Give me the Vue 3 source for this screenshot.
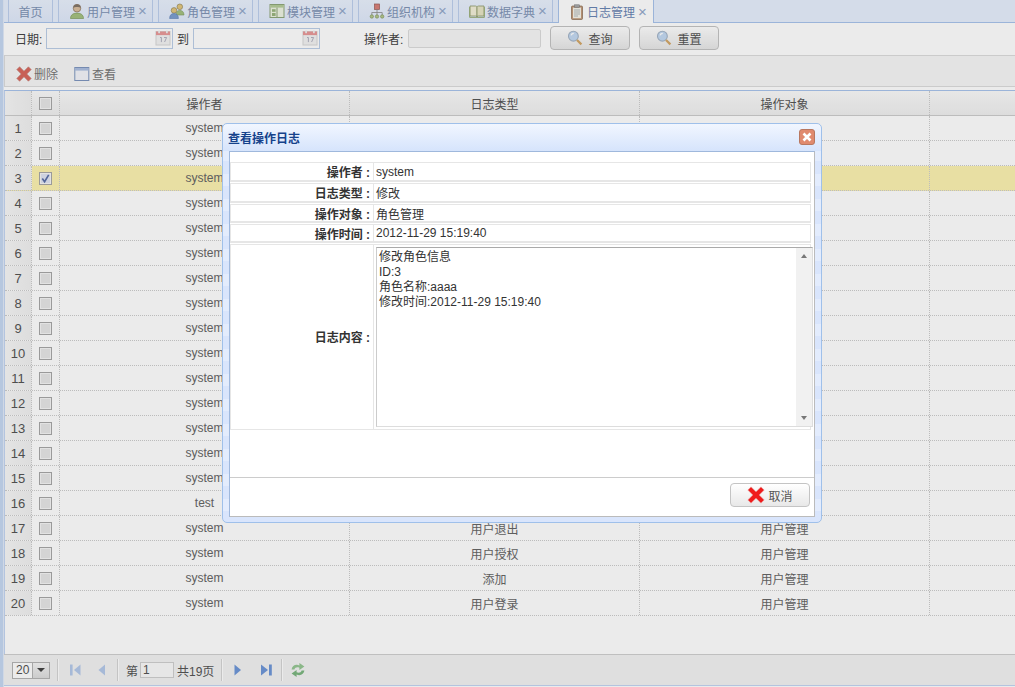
<template>
  <div class="page">
    <div class="tabs">
      <div v-for="tab in tabs" :key="tab.title" :class="['tab', { active: tab.active, plain: !tab.icon }]">
        <svg v-if="tab.icon" class="tab-icon" viewBox="0 0 16 16" v-html="icons[tab.icon]"></svg>
        <span>{{ tab.title }}</span>
        <span v-if="tab.icon" class="tab-close">×</span>
      </div>
    </div>

    <div class="search">
      <label class="date-label">日期:</label>
      <div class="date-box"><svg class="cal" viewBox="0 0 16 16" v-html="icons.calendar"></svg></div>
      <label class="to-label">到</label>
      <div class="date-box"><svg class="cal" viewBox="0 0 16 16" v-html="icons.calendar"></svg></div>
      <label class="user-label">操作者:</label>
      <div class="user-box"></div>
      <button class="btn search-btn"><svg viewBox="0 0 16 16" v-html="icons.search"></svg>查询</button>
      <button class="btn reset-btn"><svg viewBox="0 0 16 16" v-html="icons.search"></svg>重置</button>
    </div>

    <div class="actions">
      <span class="action"><svg viewBox="0 0 16 16" v-html="icons.cross"></svg>删除</span>
      <span class="action view"><svg viewBox="0 0 16 16" v-html="icons.window"></svg>查看</span>
    </div>

    <div class="grid">
      <div class="row head">
        <div class="cell num"></div>
        <div class="cell chk"><i class="box"></i></div>
        <div class="cell col">操作者</div>
        <div class="cell col">日志类型</div>
        <div class="cell col">操作对象</div>
        <div class="cell fill"></div>
      </div>
      <div v-for="(row, i) in rows" :key="i" :class="['row', { selected: i === 2 }]">
        <div class="cell num">{{ i + 1 }}</div>
        <div class="cell chk">
          <i :class="['box', { checked: i === 2 }]">
            <svg v-if="i === 2" viewBox="0 0 12 12"><path d="M2.5 6l2.5 3.5L9.5 2" fill="none" stroke="#5a6fa8" stroke-width="1.8" /></svg>
          </i>
        </div>
        <div class="cell col">{{ row.user }}</div>
        <div class="cell col">{{ row.type }}</div>
        <div class="cell col">{{ row.target }}</div>
        <div class="cell fill"></div>
      </div>
    </div>

    <div class="pager">
      <div class="page-size"><span>20</span><i class="page-arrow"></i></div>
      <b class="sep"></b>
      <svg class="pg first" viewBox="0 0 16 16" v-html="icons.first"></svg>
      <svg class="pg prev" viewBox="0 0 16 16" v-html="icons.prev"></svg>
      <b class="sep"></b>
      <span>第</span>
      <div class="pg-input">1</div>
      <span>共19页</span>
      <b class="sep"></b>
      <svg class="pg next" viewBox="0 0 16 16" v-html="icons.next"></svg>
      <svg class="pg last" viewBox="0 0 16 16" v-html="icons.last"></svg>
      <b class="sep"></b>
      <svg class="pg refresh" viewBox="0 0 16 16" v-html="icons.refresh"></svg>
    </div>

    <div class="mask"></div>

    <div class="dialog">
      <div class="dialog-head">
        <span class="dialog-title">查看操作日志</span>
        <span class="dialog-close">
          <svg viewBox="0 0 10 10"><path d="M1.5 1.5l7 7M8.5 1.5l-7 7" stroke="#fff" stroke-width="2.6" /></svg>
        </span>
      </div>
      <div class="dialog-body">
        <div class="form">
          <div v-for="f in fields" :key="f.label" class="form-row">
            <div class="form-label">{{ f.label }} :</div>
            <div class="form-value">{{ f.value }}</div>
          </div>
          <div class="form-row big">
            <div class="form-label">日志内容 :</div>
            <div class="form-value area-wrap">
              <div class="area">
                <div class="area-text">
                  <div v-for="line in content" :key="line">{{ line }}</div>
                </div>
                <div class="scroll">
                  <i class="up"></i>
                  <i class="down"></i>
                </div>
              </div>
            </div>
          </div>
        </div>
        <div class="dialog-foot">
          <button class="btn cancel-btn"><svg viewBox="0 0 16 16" v-html="icons.crossBright"></svg>取消</button>
        </div>
      </div>
    </div>
  </div>
</template>

<script setup>
const tabs = [
  { title: '首页' },
  { title: '用户管理', icon: 'user' },
  { title: '角色管理', icon: 'group' },
  { title: '模块管理', icon: 'layout' },
  { title: '组织机构', icon: 'org' },
  { title: '数据字典', icon: 'book' },
  { title: '日志管理', icon: 'clip', active: true }
]

const rows = []
for (let i = 0; i < 20; i++) {
  rows.push({ user: i === 15 ? 'test' : 'system', type: '', target: '' })
}
rows[2].type = '修改'
rows[2].target = '角色管理'
const tail = ['用户退出', '用户授权', '添加', '用户登录']
tail.forEach((t, i) => {
  rows[16 + i].type = t
  rows[16 + i].target = '用户管理'
})

const fields = [
  { label: '操作者', value: 'system' },
  { label: '日志类型', value: '修改' },
  { label: '操作对象', value: '角色管理' },
  { label: '操作时间', value: '2012-11-29 15:19:40' }
]

const content = ['修改角色信息', 'ID:3', '角色名称:aaaa', '修改时间:2012-11-29 15:19:40']

const cross = (a, b) => `<path d="M.8 3.6l2.8-2.8L8 5.2l4.4-4.4 2.8 2.8L10.8 8l4.4 4.4-2.8 2.8L8 10.8l-4.4 4.4-2.8-2.8L5.2 8z" fill="${a}" stroke="${b}" stroke-width=".7" stroke-linejoin="round"/>`

const icons = {
  user: '<path d="M1.5 15.5c0-3.6 2.8-5.4 6.5-5.4s6.5 1.8 6.5 5.4z" fill="#a5c282" stroke="#7f9c60" stroke-width=".7"/><circle cx="8" cy="5.2" r="3.8" fill="#dcbfa0" stroke="#8a7660" stroke-width=".7"/><path d="M4.2 4.8C4.6 2 6 1.3 8 1.3s3.5.8 3.8 3.5C10 3.6 6 3.6 4.2 4.8z" fill="#85776a"/>',
  group: '<circle cx="10.8" cy="3.8" r="2.8" fill="#e3c77e" stroke="#8a7f55" stroke-width=".6"/><path d="M7 12c0-3 1.6-4.6 3.8-4.6s4.2 1.4 4.2 4.6z" fill="#a5c282" stroke="#7f9c60" stroke-width=".6"/><circle cx="5" cy="7.4" r="2.8" fill="#e3c77e" stroke="#8a7f55" stroke-width=".6"/><path d="M.6 15.5c0-3.4 1.8-5 4.4-5s4.4 1.6 4.4 5z" fill="#7d9fd0" stroke="#5f82b5" stroke-width=".6"/>',
  layout: '<rect x="1" y="1.5" width="14" height="13" fill="#eef3e2" stroke="#8fa67a"/><rect x="1.5" y="2" width="13" height="2.6" fill="#b5cc9a"/><rect x="3" y="6.2" width="3.6" height="2.6" fill="#9ab57e"/><rect x="3" y="10" width="3.6" height="3" fill="#9ab57e"/><path d="M8 4.6v9.4" stroke="#8fa67a"/>',
  org: '<rect x="5.5" y="1" width="5" height="5.4" fill="#d9827a" stroke="#9a5b56" stroke-width=".7"/><path d="M8 6.4v3M2.8 12V9.5h10.4V12M8 9.5V12" fill="none" stroke="#8d8d8d" stroke-width=".8"/><circle cx="2.8" cy="13.5" r="1.7" fill="#b5c88d" stroke="#7d9257" stroke-width=".6"/><circle cx="8" cy="13.5" r="1.7" fill="#b5c88d" stroke="#7d9257" stroke-width=".6"/><circle cx="13.2" cy="13.5" r="1.7" fill="#b5c88d" stroke="#7d9257" stroke-width=".6"/>',
  book: '<path d="M1 3h5.5c.8 0 1.5.5 1.5 1.2V14c0-.7-.7-1-1.5-1H1z" fill="#f2efd8" stroke="#8d9a6a" stroke-width=".8"/><path d="M15 3H9.5C8.7 3 8 3.5 8 4.2V14c0-.7.7-1 1.5-1H15z" fill="#e8e5c6" stroke="#8d9a6a" stroke-width=".8"/><path d="M.6 4v10.4h14.8V4" fill="none" stroke="#9cb07a" stroke-width="1"/>',
  clip: '<rect x="2.5" y="2" width="11" height="13.5" rx="1" fill="#c49c7c" stroke="#8a6b52" stroke-width=".7"/><rect x="4" y="3.6" width="8" height="10.6" fill="#f6f3ea"/><rect x="5.5" y=".8" width="5" height="2.8" fill="#a8a8a8" stroke="#777" stroke-width=".5"/><path d="M5 6h6M5 8h6M5 10h6M5 12h4" stroke="#a5abb1" stroke-width=".8"/>',
  calendar: '<rect x="1" y="1.5" width="14" height="13.5" fill="#f2f2f2" stroke="#d8d8d8"/><rect x="1" y="1.5" width="14" height="3.6" fill="#e99a9a"/><rect x="3.2" y=".6" width="1.8" height="2.6" fill="#eee"/><rect x="11" y=".6" width="1.8" height="2.6" fill="#eee"/><path d="M5 7.5h1.4v4.6M9 7.5h2.6L9.6 12" fill="none" stroke="#aab" stroke-width=".9"/>',
  search: '<circle cx="6.4" cy="6.2" r="4.9" fill="#c4daf2" stroke="#a5b5c8" stroke-width="1.1"/><path d="M4 5.4c.4-1.3 1.4-2 2.8-2" fill="none" stroke="#fff" stroke-width="1.2"/><path d="M10 10l4.4 4.4" stroke="#d3a768" stroke-width="2.2"/>',
  cross: cross('#d9695e', '#c98a82'),
  crossBright: cross('#f01c1c', '#e88a8a'),
  window: '<rect x=".8" y="1.5" width="14" height="13" fill="#f3f5fa" stroke="#7f96bf"/><rect x="1" y="2" width="13.6" height="2.6" fill="#aec1e2"/>',
  first: '<rect x="2" y="2.5" width="2.6" height="11" fill="#b5c9ea"/><path d="M12.5 2.5v11L6 8z" fill="#b5c9ea"/>',
  prev: '<path d="M11 2.5v11L4.5 8z" fill="#b5c9ea"/>',
  next: '<path d="M4.5 2.5v11L11 8z" fill="#6f97d8"/>',
  last: '<path d="M3 2.5v11L10 8z" fill="#6f97d8"/><rect x="11" y="2.5" width="2.8" height="11" fill="#6f97d8"/>',
  refresh: '<path d="M1.6 7.4C2 3.8 5.6 1.8 9.4 3.4V1l5 3.6-5 3.4V5.7C7.4 4.7 5 5.2 4.4 7.4z" fill="#96c794"/><path d="M14.4 8.6c-.4 3.6-4 5.6-7.8 4V15l-5-3.6 5-3.4v2.3c2 1 4.4.5 5-1.7z" fill="#7cb780"/>'
}
</script>

<style>
html, body {
  margin: 0;
  height: 100%;
  overflow: hidden;
}
</style>

<style scoped>
.page {
  position: relative;
  width: 1015px;
  height: 687px;
  box-sizing: border-box;
  padding-left: 4px;
  background: #fff;
  font-family: "Liberation Sans", "Noto Sans CJK SC", sans-serif;
  font-size: 12px;
  color: #444;
  overflow: hidden;
  display: flex;
  flex-direction: column;
  box-shadow: inset 3px 0 0 #c6d8f2, inset 4px 0 0 #e2ebf9;
}

.tabs {
  height: 22px;
  flex: none;
  display: flex;
  gap: 5px;
  padding-left: 4px;
  background: #e6effd;
  border-bottom: 1px solid #a9c4ec;
}

.tab {
  width: 95px;
  height: 22px;
  box-sizing: border-box;
  display: flex;
  align-items: center;
  padding: 0 0 0 10px;
  background: linear-gradient(#eaf1fd, #e0eafb);
  border: 1px solid #bdd0ee;
  border-width: 0 1px;
  color: #8094b6;
}

.tab.plain {
  width: 45px;
  padding: 0;
  justify-content: center;
}

.tab.active {
  width: 96px;
  height: 23px;
  background: #fff;
  border-color: #a9c4ec;
  color: #6a86b4;
}

.tab-icon {
  width: 16px;
  height: 16px;
  margin-right: 2px;
  flex: none;
}

.tab-close {
  margin-left: 3px;
  font-size: 15px;
  line-height: 16px;
  color: #93a8ca;
}

.search {
  height: 30px;
  flex: none;
  display: flex;
  align-items: center;
  background: #fff;
  border-bottom: 1px solid #ddd;
  padding: 0 0 2px 11px;
}

.date-label {
  width: 31px;
}

.date-box {
  width: 125px;
  height: 19px;
  border: 1px solid #bccfe8;
  background: #fff;
  display: flex;
  justify-content: flex-end;
  align-items: center;
}

.cal {
  width: 16px;
  height: 16px;
  margin-right: 1px;
}

.to-label {
  width: 20px;
  text-align: center;
}

.user-label {
  margin-left: 44px;
  width: 44px;
}

.user-box {
  width: 131px;
  height: 17px;
  border: 1px solid #ddd;
  background: #f7f7f7;
  border-radius: 2px;
}

.btn {
  display: flex;
  align-items: center;
  justify-content: center;
  width: 80px;
  height: 24px;
  padding: 0;
  border: 1px solid #c4c4c4;
  border-radius: 4px;
  background: linear-gradient(#fff, #e8e8e8);
  font: inherit;
  color: #555;
}

.btn svg {
  width: 16px;
  height: 16px;
  margin-right: 5px;
}

.search-btn {
  margin-left: 9px;
}

.reset-btn {
  margin-left: 9px;
}

.actions {
  height: 25px;
  flex: none;
  display: flex;
  align-items: center;
  padding: 5px 0 0 11px;
  background: #f7f7f7;
  border-bottom: 1px solid #ddd;
  border-left: 1px solid #ddd;
  color: #777;
}

.action {
  display: flex;
  align-items: center;
}

.action svg {
  width: 16px;
  height: 16px;
  margin-right: 2px;
}

.action.view {
  margin-left: 16px;
}

.grid {
  flex: 1;
  margin-top: 3px;
  border-top: 1px solid #a9c4ec;
  border-left: 1px solid #c3d5f2;
}

.row {
  height: 25px;
  box-sizing: border-box;
  display: flex;
  border-bottom: 1px dotted #ccc;
  background: #fff;
  color: #666;
}

.row.head {
  border-bottom: 1px solid #ccc;
  background: linear-gradient(#fbfbfb, #efefef);
  color: #555;
}

.row.selected {
  background: #fcf2b1;
}

.cell {
  box-sizing: border-box;
  display: flex;
  align-items: center;
  justify-content: center;
  border-right: 1px dotted #ccc;
}

.num {
  width: 27px;
  background: linear-gradient(to right, #f8f8f8, #f0f0f0);
  color: #555;
  font-size: 13px;
}

.chk {
  width: 28px;
}

.col {
  width: 290px;
}

.fill {
  flex: 1;
  border-right: 0;
}

.box {
  display: block;
  width: 13px;
  height: 13px;
  box-sizing: border-box;
  border: 1px solid #a8a8a8;
  background: #e6e6e6;
  box-shadow: inset 0 0 0 1px #f6f6f6;
}

.box.checked {
  background: #dfe4f2;
}

.box svg {
  display: block;
  width: 11px;
  height: 11px;
}

.pager {
  height: 32px;
  box-sizing: border-box;
  flex: none;
  margin-bottom: 1px;
  display: flex;
  align-items: center;
  padding-left: 8px;
  border-top: 1px solid #d0d0d0;
  border-bottom: 1px solid #c3d5f2;
  background: #f2f2f2;
  color: #555;
}

.page-size {
  width: 38px;
  height: 17px;
  box-sizing: border-box;
  display: flex;
  align-items: center;
  justify-content: space-between;
  border: 1px solid #b5b5b5;
  background: #fff;
  padding-left: 3px;
}

.page-arrow {
  width: 16px;
  height: 15px;
  background: linear-gradient(#f4f4f4, #ddd);
  border-left: 1px solid #b5b5b5;
  position: relative;
}

.page-arrow::after {
  content: "";
  position: absolute;
  left: 4px;
  top: 5px;
  border: 4px solid transparent;
  border-top: 4px solid #444;
  border-bottom: 0;
}

.sep {
  width: 1px;
  height: 22px;
  background: #d5d5d5;
  border-right: 1px solid #fff;
  margin: 0 7px;
}

.pg {
  width: 16px;
  height: 16px;
}

.first {
  margin-left: 2px;
}

.prev {
  margin-left: 10px;
}

.last {
  margin-left: 12px;
}

.pg-input {
  width: 34px;
  height: 16px;
  box-sizing: border-box;
  border: 1px solid #d0d0d0;
  background: #fafafa;
  margin: 0 3px 0 2px;
  padding-left: 2px;
  line-height: 14px;
}

.mask {
  position: absolute;
  inset: 0;
  background: rgba(0, 0, 0, 0.08);
}

.dialog {
  position: absolute;
  left: 222px;
  top: 123px;
  width: 600px;
  height: 400px;
  box-sizing: border-box;
  padding: 0 6px 5px;
  border: 1px solid #9fc0ea;
  border-radius: 5px;
  background:
    linear-gradient(#f1f6ff, #dfeafd 18px, #d6e4fc 27px, transparent 27px),
    repeating-linear-gradient(#e3ecfd 0, #e3ecfd 12px, #d9e5fc 12px, #d9e5fc 25px);
  display: flex;
  flex-direction: column;
}

.dialog-head {
  height: 27px;
  flex: none;
  display: flex;
  align-items: center;
  justify-content: space-between;
}

.dialog-title {
  font-weight: bold;
  color: #15428b;
  margin-left: -1px;
}

.dialog-close {
  width: 16px;
  height: 16px;
  margin-top: -1px;
  border-radius: 3px;
  background: #e08a6e;
  border: 1px solid #b8775f;
  box-sizing: border-box;
  display: flex;
  align-items: center;
  justify-content: center;
}

.dialog-close svg {
  width: 10px;
  height: 10px;
}

.dialog-body {
  flex: 1;
  background: #fff;
  border: 1px solid #a5b6d0;
  border-color: #9fb8dc #bbb #bbb #9fb8dc;
  display: flex;
  flex-direction: column;
  color: #333;
}

.form {
  flex: 1;
  padding: 10px 3px 0 0;
  display: flex;
  flex-direction: column;
  gap: 1px;
}

.form-row {
  height: 20px;
  box-sizing: border-box;
  display: flex;
  border: 1px solid #e6e6e6;
  border-bottom-width: 2px;
}

.form-row:nth-child(3),
.form-row:nth-child(4) {
  height: 19px;
}

.form-row.big {
  height: 186px;
  border-bottom-width: 1px;
}

.form-label {
  width: 143px;
  box-sizing: border-box;
  display: flex;
  align-items: center;
  justify-content: flex-end;
  padding-right: 3px;
  white-space: pre;
  font-weight: bold;
  color: #333;
  border-right: 1px solid #e6e6e6;
  margin-right: 2px;
}

.big .form-label {
  padding-bottom: 2px;
}

.form-value {
  flex: 1;
  display: flex;
  align-items: center;
}

.area-wrap {
  padding: 2px 0;
  align-items: stretch;
}

.area {
  flex: 1;
  margin-right: -3px;
  display: flex;
  border: 1px solid #ddd;
  border-top-color: #aaa;
  border-left-color: #ccc;
}

.area-text {
  flex: 1;
  padding: 2px 0 0 2px;
  line-height: 15px;
}

.scroll {
  width: 16px;
  background: #f1f1f1;
  display: flex;
  flex-direction: column;
  justify-content: space-between;
  align-items: center;
  padding: 6px 0;
}

.up {
  border: 3.5px solid transparent;
  border-bottom: 4px solid #777;
  border-top: 0;
}

.down {
  border: 3.5px solid transparent;
  border-top: 4px solid #777;
  border-bottom: 0;
}

.dialog-foot {
  height: 39px;
  flex: none;
  box-sizing: border-box;
  border-top: 1px solid #ccc;
  display: flex;
  justify-content: flex-end;
  padding: 5px 4px 0 0;
}

.cancel-btn svg {
  width: 18px;
  height: 18px;
  margin-right: 3px;
}
</style>
